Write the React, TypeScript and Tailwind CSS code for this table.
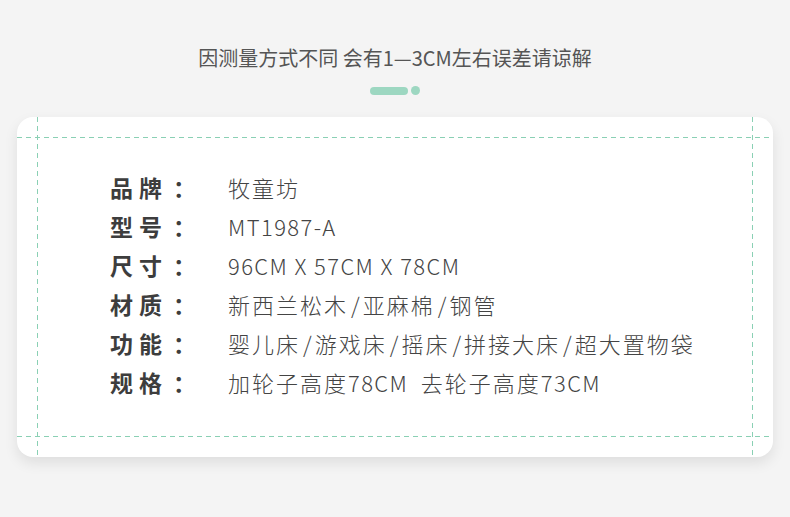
import React from 'react';

const specs = [
  { label: '品牌', value: '牧童坊' },
  { label: '型号', value: 'MT1987-A' },
  { label: '尺寸', value: '96CM X 57CM X 78CM' },
  { label: '材质', value: '新西兰松木/亚麻棉/钢管' },
  { label: '功能', value: '婴儿床/游戏床/摇床/拼接大床/超大置物袋' },
  { label: '规格', value: '加轮子高度78CM  去轮子高度73CM' },
];

const font = { fontFamily: '"Noto Sans CJK SC", "Noto Sans", sans-serif' };

// latin runs, slashes and CJK are spaced a little differently in the source image
function Value({ text }: { text: string }) {
  const parts = text.split(/([A-Za-z0-9\- ]+|\/)/).filter(Boolean);
  return (
    <span className="text-[22px] font-light text-[#444] whitespace-pre">
      {parts.map((p, i) =>
        p === '/' ? (
          <span key={i} className="px-[3px]">/</span>
        ) : /^[A-Za-z0-9\- ]+$/.test(p) ? (
          <span key={i} className="tracking-[1.4px]">{p}</span>
        ) : (
          <span key={i} className="tracking-[2px]">{p}</span>
        )
      )}
    </span>
  );
}

const dashH = 'absolute left-0 right-0 h-px bg-[repeating-linear-gradient(90deg,#8ad0b4_0_5px,transparent_5px_9px)]';
const dashV = 'absolute top-0 bottom-0 w-px bg-[repeating-linear-gradient(180deg,#8ad0b4_0_5px,transparent_5px_9px)]';

export default function App() {
  return (
    <div
      className="w-[790px] h-[517px] bg-[#f4f4f4] flex flex-col items-center overflow-hidden"
      style={font}
    >
      <p className="mt-[44px] h-[28px] leading-[28px] text-[20px] text-[#555] whitespace-pre">
        因测量方式不同 会有1—3CM左右误差请谅解
      </p>

      <div className="mt-[14px] flex items-center gap-[3px]">
        <div className="w-[38px] h-[8px] rounded-full bg-[#9dd7c1]" />
        <div className="w-[9px] h-[9px] rounded-full bg-[#9dd7c1]" />
      </div>

      <div className="relative mt-[22px] w-[756px] h-[340px] bg-white rounded-[16px] shadow-[0_6px_14px_rgba(0,0,0,0.09)]">
        <div className={`${dashH} top-[20px]`} />
        <div className={`${dashH} bottom-[20px]`} />
        <div className={`${dashV} left-[20px]`} />
        <div className={`${dashV} right-[20px]`} />

        <div className="pt-[51px] pl-[93px] flex flex-col">
          {specs.map((s) => (
            <div key={s.label} className="flex items-center h-[39px]">
              <span className="w-[118px] flex text-[23px] font-bold text-[#3d3d3d]">
                <span className="tracking-[6px]">{s.label}</span>
                <span className="ml-[5px]">：</span>
              </span>
              <Value text={s.value} />
            </div>
          ))}
        </div>
      </div>
    </div>
  );
}
